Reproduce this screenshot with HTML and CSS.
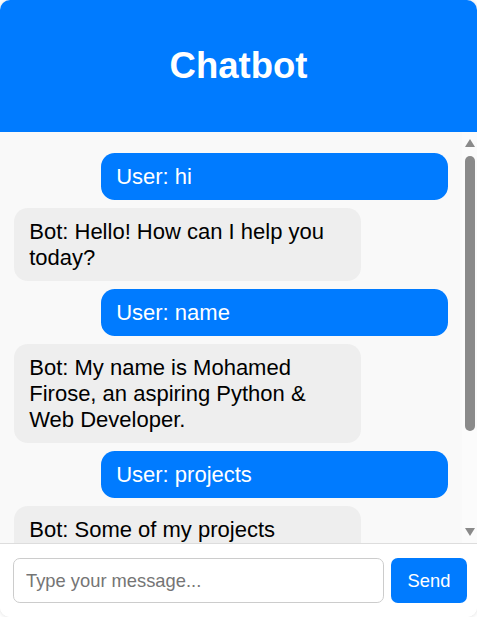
FILE: index.html
```html
<!DOCTYPE html>
<html lang="en">
<head>
<meta charset="UTF-8">
<title>Chatbot</title>
<link rel="stylesheet" href="styles.css">
</head>
<body>
<div class="chat-container">
  <header class="chat-header">
    <h1>Chatbot</h1>
  </header>
  <div class="chat-area">
    <div class="chat-box">
      <div class="message user">User: hi</div>
      <div class="message bot">Bot: Hello! How can I help you today?</div>
      <div class="message user">User: name</div>
      <div class="message bot">Bot: My name is Mohamed Firose, an aspiring Python &amp; Web Developer.</div>
      <div class="message user">User: projects</div>
      <div class="message bot">Bot: Some of my projects include a Chatbot, a Portfolio Website, a To-Do List App and a Weather App using Python and JavaScript.</div>
    </div>
    <div class="scrollbar" aria-hidden="true">
      <svg class="arrow" width="10" height="8" viewBox="0 0 10 8"><path d="M5 0 L10 8 L0 8 Z" fill="#8a8a8a"/></svg>
      <div class="thumb"></div>
      <div class="spacer"></div>
      <svg class="arrow" width="10" height="8" viewBox="0 0 10 8"><path d="M0 0 L10 0 L5 8 Z" fill="#8a8a8a"/></svg>
    </div>
  </div>
  <div class="chat-input">
    <input type="text" class="msg-input" placeholder="Type your message...">
    <button class="send-btn">Send</button>
  </div>
</div>
</body>
</html>
```

FILE: styles.css
```css
* { box-sizing: border-box; }
html, body {
  margin: 0;
  padding: 0;
  height: 100%;
  background: #ffffff;
  font-family: "Liberation Sans", Arial, sans-serif;
}
.chat-container {
  height: 617px;
  display: flex;
  flex-direction: column;
  border-radius: 10px;
  overflow: hidden;
  background: #ffffff;
  box-shadow: 0 0 4px rgba(0,0,0,0.15);
}
.chat-header {
  height: 132px;
  flex: 0 0 132px;
  background: #007bff;
  display: flex;
  align-items: center;
  justify-content: center;
}
.chat-header h1 {
  margin: 0;
  color: #ffffff;
  font-size: 36.5px;
  font-weight: bold;
}
.chat-area {
  flex: 1 1 auto;
  min-height: 0;
  display: flex;
  background: #f9f9f9;
}
.chat-box {
  flex: 1 1 auto;
  min-width: 0;
  overflow: hidden;
  padding: 13px 13.75px;
  display: flow-root;
}
.scrollbar {
  flex: 0 0 15px;
  display: flex;
  flex-direction: column;
  align-items: center;
  padding: 7px 0 7px 1px;
  background: #fbfbfb;
}
.arrow {
  display: block;
  flex: 0 0 auto;
}
.thumb {
  flex: 0 0 275px;
  width: 10px;
  margin-top: 9px;
  border-radius: 5px;
  background: #8a8a8a;
}
.spacer {
  flex: 1 1 auto;
}
.message {
  width: 80%;
  margin: 8px 0;
  padding: 10.5px 15.5px;
  border-radius: 13.75px;
  font-size: 22px;
  line-height: 26px;
}
.user {
  margin-left: auto;
  background: #007bff;
  color: #ffffff;
}
.bot {
  background: #eeeeee;
  color: #000000;
}
.chat-input {
  flex: 0 0 auto;
  display: flex;
  gap: 7px;
  padding: 13.75px 10px 13.75px 13px;
  border-top: 1px solid #dddddd;
  background: #ffffff;
}
.msg-input {
  flex: 1 1 auto;
  height: 45.5px;
  border: 1px solid #cccccc;
  border-radius: 6.9px;
  padding: 0 12px;
  font-family: "Liberation Sans", Arial, sans-serif;
  font-size: 18.33px;
  color: #000;
  outline: none;
}
.msg-input::placeholder { color: #757575; }
.send-btn {
  flex: 0 0 auto;
  height: 45.5px;
  width: 76px;
  border: none;
  border-radius: 6.9px;
  background: #007bff;
  color: #ffffff;
  font-family: "Liberation Sans", Arial, sans-serif;
  font-size: 18.33px;
  padding: 0;
}
```
